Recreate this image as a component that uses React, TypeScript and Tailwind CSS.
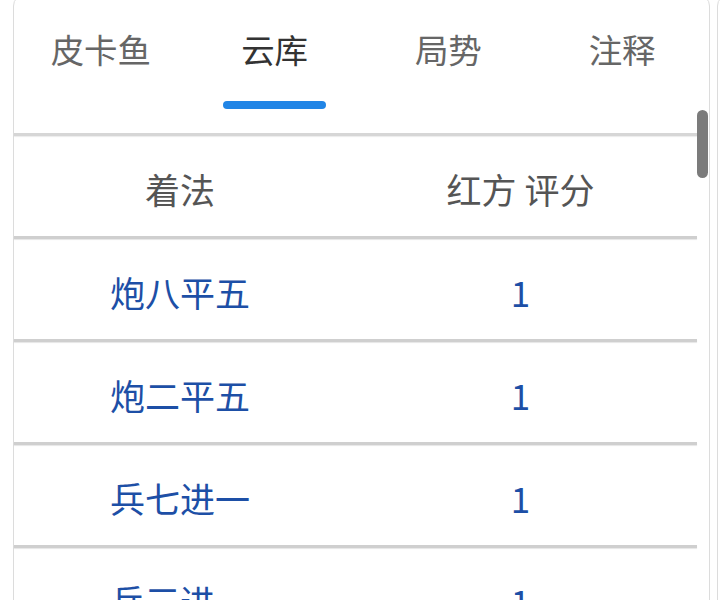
const tabs = ["皮卡鱼", "云库", "局势", "注释"];

const moves = [
  { move: "炮八平五", score: "1" },
  { move: "炮二平五", score: "1" },
  { move: "兵七进一", score: "1" },
  { move: "兵三进一", score: "1" },
];

export default function App() {
  return (
    <div className="h-[600px] w-[725px] overflow-hidden bg-white font-['Noto_Sans_CJK_SC','Noto_Sans',sans-serif]">
      <div className="-mt-[6px] flex gap-[7px] pl-[13px]">
        <div className="relative h-[640px] w-[697px] shrink-0 rounded-t-[12px] border border-[#dcdcdc] bg-white">
          {/* tabs */}
          <div className="grid h-[116px] grid-cols-4">
            {tabs.map((t, i) => (
              <div key={t} className="flex flex-col items-center">
                <span
                  className={`mt-[34px] text-[33.5px] leading-[40px] ${
                    i === 1 ? "text-[#333333]" : "text-[#666666]"
                  }`}
                >
                  {t}
                </span>
                {i === 1 && <span className="mt-[32px] h-[8px] w-[103px] rounded-full bg-[#2185e6]" />}
              </div>
            ))}
          </div>

          {/* scroll content */}
          <div className="relative">
            <div className="pt-[22px] pr-[12px]">
              <div className="h-[3px] bg-[#d6d6d6] shadow-[0_1px_1px_rgba(0,0,0,0.08)]" />
              <div className="grid h-[100px] grid-cols-[332px_1fr] items-center pt-[6px] pr-[2px] text-[35px] text-[#555555]">
                <span className="text-center">着法</span>
                <span className="text-center">红方 评分</span>
              </div>
              {moves.map((m) => (
                <div key={m.move}>
                  <div className="h-[3px] bg-[#cfcfcf] shadow-[0_1px_1px_rgba(0,0,0,0.1)]" />
                  <div className="grid h-[100px] grid-cols-[332px_1fr] items-center pt-[6px] pr-[2px] text-[35px] text-[#1d4fa6]">
                    <span className="text-center">{m.move}</span>
                    <span className="text-center">{m.score}</span>
                  </div>
                </div>
              ))}
            </div>
            <div className="absolute top-[-1px] right-[1px] h-[68px] w-[11px] rounded-full bg-[#7b7b7b]" />
          </div>
        </div>
        <div className="h-[640px] w-[200px] shrink-0 rounded-t-[12px] border border-[#dcdcdc] bg-white" />
      </div>
    </div>
  );
}
